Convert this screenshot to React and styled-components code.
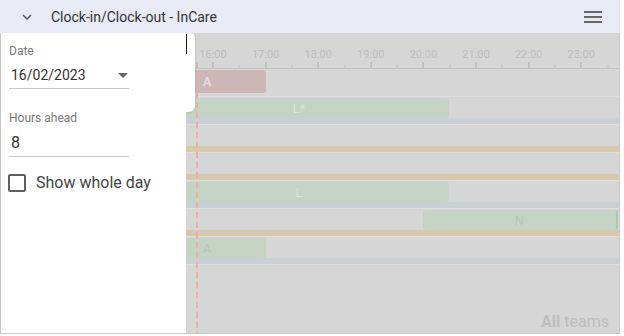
import React from "react";
import styled, { createGlobalStyle } from "styled-components";

const GlobalStyle = createGlobalStyle`
  body {
    margin: 0;
    background: #fff;
    font-family: Roboto, "Liberation Sans", Arial, sans-serif;
  }
`;

const HOUR0 = 27;
const HOUR_W = 52.6;
const hourX = h => HOUR0 + (h - 16) * HOUR_W;

const hours = [16, 17, 18, 19, 20, 21, 22, 23];

const rows = [
  { band: null, bars: [{ left: -38, width: 118, kind: "red", text: "A" }] },
  { band: "blue", bars: [{ left: -37, width: 300, kind: "green", text: "L*", light: true }] },
  { band: "orange", bars: [] },
  { band: "orange", bars: [] },
  { band: "blue", bars: [{ left: -37, width: 300, kind: "green", text: "L", light: true }] },
  { band: "orange", bars: [{ left: 237, width: 195, kind: "green", text: "N", edge: true }] },
  { band: "blue", bars: [{ left: -38, width: 118, kind: "green", text: "A" }] }
];

const bandColors = {
  blue: "#c9cfd3",
  orange: "#d8c8ac"
};

const barColors = {
  red: "#cdb6b6",
  green: "#c5d3c5"
};

const Card = styled.div`
  width: 620px;
  height: 334px;
  display: flex;
  flex-direction: column;
`;

const Header = styled.div`
  height: 33px;
  flex-shrink: 0;
  background: #e8eaf6;
  display: flex;
  align-items: center;
`;

const Chevron = styled.svg`
  width: 18px;
  height: 18px;
  margin-left: 18px;
  fill: #555;
`;

const Title = styled.div`
  margin-left: 15px;
  font-size: 14px;
  color: #333;
  flex: 1;
`;

const Menu = styled.svg`
  width: 24px;
  height: 24px;
  margin-right: 15px;
  fill: #666;
`;

const Body = styled.div`
  flex: 1;
  display: flex;
  border: 1px solid #c8c8c8;
  border-top: none;
  min-height: 0;
`;

const Panel = styled.div`
  width: 185px;
  flex-shrink: 0;
  background: #fff;
  padding: 11px 0 0 8px;
  box-sizing: border-box;
`;

const Field = styled.div`
  width: 120px;
  margin-top: ${p => p.gap || 0}px;
`;

const Label = styled.div`
  font-size: 12px;
  color: #777;
  line-height: 14px;
`;

const ValueRow = styled.div`
  display: flex;
  align-items: center;
  justify-content: space-between;
  padding: ${p => p.pad};
  border-bottom: 1px solid #c9c9c9;
  font-size: ${p => p.size}px;
  line-height: 16px;
  color: #333;
`;

const Caret = styled.span`
  width: 0;
  height: 0;
  margin-right: 1px;
  border-left: 5px solid transparent;
  border-right: 5px solid transparent;
  border-top: 5px solid #666;
`;

const CheckRow = styled.label`
  display: flex;
  align-items: center;
  gap: 10px;
  margin: 16px 0 0 -1px;
  font-size: 16px;
  color: #444;
`;

const Box = styled.span`
  width: 18px;
  height: 18px;
  box-sizing: border-box;
  border: 2px solid #5f5f5f;
  border-radius: 2px;
`;

const Timeline = styled.div`
  flex: 1;
  position: relative;
  background: #d6d6d6;
  overflow: hidden;
`;

const Ruler = styled.div`
  position: relative;
  height: 35px;
  border-bottom: 1px solid #c2c2c2;
`;

const HourLabel = styled.span`
  position: absolute;
  top: 15px;
  transform: translateX(-50%);
  font-size: 11px;
  line-height: 13px;
  color: #bcbcbc;
`;

const Tick = styled.span`
  position: absolute;
  bottom: 0;
  width: ${p => (p.major ? 2 : 1)}px;
  height: ${p => (p.major ? 6 : 3)}px;
  background: #c0c0c0;
  transform: translateX(-50%);
`;

const Row = styled.div`
  display: flex;
  flex-direction: column;
  border-bottom: 1px solid #dedede;
`;

const Lane = styled.div`
  position: relative;
  height: ${p => (p.tall ? 27 : 21)}px;
`;

const Band = styled.div`
  height: 6px;
  background: ${p => bandColors[p.kind]};
`;

const Bar = styled.div`
  position: absolute;
  top: 1px;
  bottom: ${p => (p.tall ? 3 : 0)}px;
  display: flex;
  align-items: center;
  justify-content: center;
  box-sizing: border-box;
  border-radius: 3px;
  background: ${p => barColors[p.kind]};
  border-right: ${p => (p.edge ? "2px solid #afc6af" : "none")};
  font-size: 13px;
  font-weight: ${p => (p.kind === "red" ? 700 : 400)};
  color: ${p =>
    p.kind === "red" ? "#e6dada" : p.light ? "#dbe4db" : "#b8c3b8"};
`;

const NowLine = styled.div`
  position: absolute;
  left: 10px;
  top: 29px;
  bottom: 0;
  width: 2px;
  background: repeating-linear-gradient(
    to bottom,
    #dfb4a7 0 6px,
    transparent 6px 10px
  );
`;

const Tab = styled.div`
  position: absolute;
  left: 0;
  top: 0;
  width: 9px;
  height: 79px;
  background: #fff;
  border-radius: 0 5px 6px 0;
  box-shadow: 1px 1px 2px rgba(0, 0, 0, 0.08);
`;

const TextCursor = styled.span`
  display: block;
  width: 1px;
  height: 20px;
  margin-top: 1px;
  background: #111;
`;

const Teams = styled.div`
  position: absolute;
  right: 10px;
  bottom: 2px;
  font-size: 16px;
  line-height: 18px;
  color: #bdbdbd;
  b {
    font-weight: 700;
  }
`;

export default function App() {
  return (
    <>
      <GlobalStyle />
      <Card>
        <Header>
          <Chevron viewBox="0 0 24 24">
            <path d="M16.59 8.59L12 13.17 7.41 8.59 6 10l6 6 6-6z" />
          </Chevron>
          <Title>Clock-in/Clock-out - InCare</Title>
          <Menu viewBox="0 0 24 24">
            <path d="M3 18h18v-2H3v2zm0-5h18v-2H3v2zm0-7v2h18V6H3z" />
          </Menu>
        </Header>
        <Body>
          <Panel>
            <Field>
              <Label>Date</Label>
              <ValueRow pad="9px 0 5px 2px" size={14}>
                16/02/2023
                <Caret />
              </ValueRow>
            </Field>
            <Field gap={22}>
              <Label>Hours ahead</Label>
              <ValueRow pad="10px 0 5px 2px" size={16}>
                8
              </ValueRow>
            </Field>
            <CheckRow>
              <Box />
              Show whole day
            </CheckRow>
          </Panel>
          <Timeline>
            <Ruler>
              {hours.map(h => (
                <React.Fragment key={h}>
                  <HourLabel style={{ left: hourX(h) }}>{h}:00</HourLabel>
                  <Tick major style={{ left: hourX(h) }} />
                  <Tick style={{ left: hourX(h + 0.5) }} />
                </React.Fragment>
              ))}
            </Ruler>
            {rows.map((r, i) => (
              <Row key={i}>
                <Lane tall={!r.band}>
                  {r.bars.map((b, j) => (
                    <Bar
                      key={j}
                      kind={b.kind}
                      light={b.light}
                      edge={b.edge}
                      tall={!r.band}
                      style={{ left: b.left, width: b.width }}
                    >
                      {b.text}
                    </Bar>
                  ))}
                </Lane>
                {r.band && <Band kind={r.band} />}
              </Row>
            ))}
            <NowLine />
            <Tab>
              <TextCursor />
            </Tab>
            <Teams>
              <b>All</b> teams
            </Teams>
          </Timeline>
        </Body>
      </Card>
    </>
  );
}
